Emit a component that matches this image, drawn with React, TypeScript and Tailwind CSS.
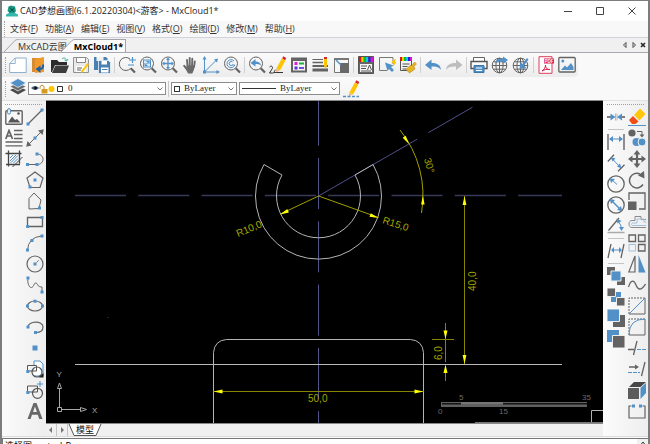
import React from 'react';
import type { ReactNode } from 'react';

const K = '#636363';
const B = '#5290c8';

type Tool = { name: string; art: ReactNode } | null;

function ToolButton({ name, art }: { name: string; art: ReactNode }) {
  return (
    <button type="button" aria-label={name} title={name} className="size-[18px] shrink-0 hover:bg-sky-100">
      <svg viewBox="0 0 18 18" className="block size-full" fill="none" stroke={K} strokeWidth="1">
        {art}
      </svg>
    </button>
  );
}

function ToolRow({ tools }: { tools: Tool[] }) {
  return (
    <div className="flex items-center gap-[3px]">
      {tools.map((t, i) =>
        t ? <ToolButton key={i} {...t} /> : <span key={i} className="h-4 w-px shrink-0 bg-[#d0d0d0]" />,
      )}
    </div>
  );
}

function ToolColumn({ tools }: { tools: Tool[] }) {
  return (
    <div className="flex flex-col items-center gap-[3px]">
      {tools.map((t, i) =>
        t ? <ToolButton key={i} {...t} /> : <span key={i} className="h-px w-4 shrink-0 bg-[#c4c4c4]" />,
      )}
    </div>
  );
}

function Dot({ x, y, s = 3 }: { x: number; y: number; s?: number }) {
  return <rect x={x - s / 2} y={y - s / 2} width={s} height={s} fill={B} stroke="none" />;
}

const Lens = () => (
  <>
    <circle cx="8" cy="7.5" r="6.5" />
    <path d="M12.7 12.2l4.3 4.3" strokeWidth="2.2" />
  </>
);

const Globe = () => (
  <>
    <circle cx="8.5" cy="9.5" r="7.3" />
    <ellipse cx="8.5" cy="9.5" rx="3.6" ry="7.3" />
    <path d="M8.5 2v15M1.2 9.5h14.6M2.5 5.8h12M2.5 13.2h12" />
  </>
);

const Rainbow = ({ x, y, w, h }: { x: number; y: number; w: number; h: number }) => (
  <g stroke="none">
    {['#e01020', '#f0d000', '#10c020', '#10c8e0', '#2020e0', '#e010d0'].map((c, i) => (
      <rect key={c} x={x + (i * w) / 6} y={y} width={w / 6} height={h} fill={c} />
    ))}
  </g>
);

const Pencil = () => (
  <g stroke="none">
    <path d="M14.3.3l3 1.6-1.2 2.3-3-1.6z" fill="#d3272f" />
    <path d="M12.800 2.600l3.600 1.900-5.400 9.900-3.600-1.900z" fill="#ffc400" />
    <path d="M7.300 12.600l3.300 1.800-3.800 2z" fill="#e6b98a" />
  </g>
);

const fileTools: Tool[] = [
  { name: '新建', art: <><path d="M.7 7.5L6.2 2h11v14.5H.7z" fill="#fff" stroke="#8fb0cf" /><path d="M.7 7.5h5.5V2" stroke="#8fb0cf" /></> },
  { name: '退出', art: <><path d="M2 2h8v14H2z" fill="#d98b34" stroke="none" /><path d="M5 3l9-2v15l-9 1z" fill="#ef9a2b" stroke="none" /><path d="M13 8.500c.5 3-.5 4.500-3.500 4.500" stroke="#1e5fa8" strokeWidth="2" /><path d="M10.500 9.500v7.500L5.500 13z" fill="#1e5fa8" stroke="none" /></> },
  { name: '打开', art: <><path d="M0 4h6l2 2h8v3H4L1 16H0z" fill="#2b2b2b" stroke="none" /><path d="M4.500 9.500H18L15 17H1z" fill="#3c3c3c" stroke="none" /><path d="M11 3c2-2 4-1 4.500 1.500M17 3l-1.500 2L13.500 4" stroke="#3fae9c" /></> },
  { name: '保存', art: <><path d="M1.500 1.500h13l2 2v13h-15z" fill="#e9e9e9" stroke="#929292" /><path d="M4.500 1.500h9v5h-9z" fill="#fff" stroke="#8b8b8b" /><path d="M4 10h10v6H4z" fill="#fff" stroke="none" /><path d="M5 12h5M5 14h4" /><path d="M17 8l-6 8-2 1 .5-2.500L15.500 7z" fill="#ffc400" stroke="none" /></> },
  { name: '另存为', art: <><path d="M1 1h12l1.500 1.500V14H1z" fill="#4b80b2" stroke="none" /><path d="M3.500 1h7v4h-7z" fill="#f2f2f2" stroke="none" /><path d="M5.500 4.500h10l2 2V17.500h-12z" fill="#4b80b2" stroke="#eef2f6" strokeWidth=".8" /><path d="M8.500 5h5.500v3.500H8.500zM8 11.500h7.500v5H8z" fill="#fff" stroke="none" /><path d="M9 13.500h5.500" stroke="#4b80b2" /></> },
  null,
  { name: '窗口缩放', art: <><path d="M12.500 12.500A6.500 6.500 0 1112 3" /><path d="M12.700 12.200l4.300 4.300" strokeWidth="2.200" /><path d="M11 4h7m-3.500-3v6M10 9h6" stroke={B} strokeWidth="1.200" /></> },
  { name: '范围缩放', art: <><Lens /><rect x="4.500" y="4" width="7" height="7" stroke={B} fill="#dceaf5" /><path d="M6 9.500l4-4M7.500 5.500H10V8M6 7v2.500h2.500" stroke={B} /></> },
  { name: '实时缩放', art: <><Lens /><path d="M8 2.500v10M3 7.500h10" stroke={B} strokeWidth="1.300" /><path d="M8 1.500l2 2.500H6zM8 13.500L6 11h4zM2 7.500l2.500-2v4zM14 7.500l-2.500 2v-4z" fill={B} stroke="none" /></> },
  { name: '平移', art: <g stroke="#6a6a6a" strokeLinecap="round"><path d="M6 4l.5 6M8.700 2v8M11.300 2.700L11 10M13.800 5.500L13 11" strokeWidth="1.900" /><path d="M3.200 9.800l3 3.700" strokeWidth="2" /><path d="M5.700 9.500h8l-.7 4-1.700 4H7L5 13.500z" fill="#6a6a6a" stroke="none" /></g> },
  { name: '坐标系', art: <><path d="M2.500 1.500v14.500H16M3 15.500L14.500 4" stroke={B} /><path d="M2.500 0l2 3.500h-4zM18 16l-3.500 2v-4zM16 2.500l-1 4-3-3z" fill={B} stroke="none" /><path d="M1 14.500h3v3H1z" fill={B} stroke="none" /></> },
  { name: '重生成', art: <><Lens /><path d="M11 5a4 4 0 10.800 4H9M9.500 6a2 2 0 100 3" stroke={B} /></> },
  null,
  { name: '上一视图', art: <><Lens /><path d="M2.500 7l5-4v2.500c3 0 5 1 5.500 4-1.500-1.500-3-1.500-5.500-1.500v2.500z" fill={B} stroke="none" /></> },
  { name: '编辑线', art: <><path d="M.5 11c2-2 4 0 2.500 2l-2.500 4h3c3 0 1-3 3-3M5 16.500h9" stroke="#333" /><Pencil /></> },
  { name: '特性', art: <><path d="M1 1.500h16v15H1z" fill={K} stroke="none" /><path d="M3 5h12v9.500H3z" fill="#f4f4f4" stroke="none" /><path d="M4.500 6h3v3h-3z" fill="#e020d0" stroke="none" /><path d="M4.500 10.500h3v3h-3z" fill="#5a30e0" stroke="none" /><path d="M9 6.500h5v2H9z" fill="#20b040" stroke="none" /><path d="M9 11h5v2H9z" fill="#7050e0" stroke="none" /></> },
  { name: '线型', art: <><path d="M1.500 3.500H12" /><path d="M1.500 6.500H12" strokeWidth="1.500" /><path d="M1.500 10H17" strokeWidth="2" /><path d="M1.500 14H17" strokeWidth="3" /><path d="M13 2h3v8l-1.500 3L13 10z" fill="#ffc400" stroke="none" /><path d="M13 1h3v2h-3z" fill="#d3272f" stroke="none" /></> },
  { name: '图层', art: <><path d="M2.500 2.500h14v14h-14z" fill="#f6f6f6" stroke="#777" /><path d="M2 2h15v2H2z" fill="#777" stroke="none" /><path d="M8 7h9v10H8z" fill="#686868" stroke="none" /><path d="M4 4l5 5" stroke={B} strokeWidth="1.400" /></> },
  null,
  { name: '颜色', art: <><path d="M1.500.5h15v17h-15z" fill="#666" stroke="#555" /><Rainbow x={2} y={1} w={14} h={5} /><path d="M3 8h12v8H3z" fill="#f4f4f4" stroke="none" /><path d="M4 10h6M4 12.500h5M4 15h10M10.500 14l2-5 2 5" stroke="#555" /></> },
  { name: '快速选择', art: <><path d="M15 8V1.500H1.500v13H9" stroke="#777" /><path d="M7 6.500l8.500 3-2.500 1.500 3 3-2 2-3-3L9.500 15z" fill={B} stroke="none" /><path d="M15 4l3-1-1 3h1.500l-4 5 1-4h-2z" fill="#ffc400" stroke="none" /></> },
  { name: '特性匹配', art: <><path d="M1.500 1.500h11v13h-11z" fill="#f2f2f2" stroke="#555" /><Rainbow x={1} y={1} w={12} h={4} /><path d="M3.500 8h7M3.500 10.500h5M3.500 13h4" stroke="#555" /><path d="M15.500 6l2 2-2.500 2.500 1 2.500-5.500 4-3.500-3.500L11 9.500h2z" fill="#e6b322" stroke="#a87b12" strokeWidth=".5" /></> },
  null,
  { name: '撤销', art: <path d="M1 9l6.500-5.500V7c5 0 9 1.500 9.500 7-2-3-4.500-3.500-9.500-3.500V14z" fill={B} stroke="none" /> },
  { name: '重做', art: <path d="M17.500 9L11 3.500V7c-5 0-9.500 1.500-10 7 2-3 5-3.500 10-3.500V14z" fill="#bdbdbd" stroke="none" /> },
  null,
  { name: '打印', art: <><path d="M3.500 5V1.500h11V5" fill="#fff" /><path d="M1 5.500h16v7H1z" fill="#fafafa" stroke="#555" strokeWidth="1.400" /><path d="M4 9.500h10v7H4z" fill={B} stroke="#3f74a3" /><path d="M6 12h6M6 14.500h6" stroke="#fff" /></> },
  { name: '发布', art: <><Globe /><path d="M4 8c1-5 4-6 8-5.500V.5L17 4l-5 4V6C9 5 6 5 4 8z" fill={B} stroke="none" /></> },
  { name: '下载', art: <><Globe /><path d="M16.500 3.500L12 9.500l2.500 2.500-7 1 1-7 2 2L15 2z" fill={B} stroke="none" /></> },
  null,
  { name: '输出PDF', art: <><path d="M2 .7h13v16.600H2z" fill="#fff" stroke="#dc3c5c" /><path d="M7 2.500h10v5H7z" fill="#d91c45" stroke="none" /><text x="7.500" y="6.800" fontSize="4.500" fontWeight="bold" fontFamily="Liberation Sans, sans-serif" fill="#fff" stroke="none">PDF</text><path d="M5 15c2-1 3.500-3.500 3.500-6 0 3 2 5 4.500 4.500-3-.5-5.500 0-8 1.500z" stroke="#d91c45" /></> },
  { name: '输出图片', art: <><rect x=".8" y="1.500" width="16.400" height="14.500" rx="1" strokeWidth="1.300" /><path d="M3 14l4-4.500 2 2L13 7l2.500 4v3z" fill={B} stroke="none" /><circle cx="4.800" cy="5" r="1.500" fill={B} stroke="none" /></> },
];

const annotateTools: Tool[] = [
  { name: '插入图像', art: <><rect x=".8" y="2.800" width="16.400" height="13.500" rx="1" strokeWidth="1.400" /><path d="M3 14.500l4-6 3 3.500 2-1 3.500 3.500z" fill="#555" stroke="none" /><circle cx="13.500" cy="5.500" r="1.300" fill="#555" stroke="none" /><rect x="2.500" y=".6" width="3" height="5.500" rx="1.500" stroke={B} fill="#eee" /></> },
  { name: '多行文字', art: <><path d="M.8 10L4 1.500 7.500 10M2 7h4.500" strokeWidth="1.700" /><path d="M9 1.500h8.500M9 5.500h8.500M9 9.500h8.500M.5 13h17M.5 16.800h17" strokeWidth="1.300" /></> },
  { name: '填充', art: <><path d="M.5 3.500h16M1 14.500h14M3.500.5v16M14.500.5v13" stroke="#444" strokeWidth="1.300" /><path d="M5 8l3-3M5 11l6-6M5.500 13L13 5.500M8.500 13L13 8.500" stroke={B} /><path d="M17.500 7l-10 10" stroke="#444" /></> },
];

const drawTools: Tool[] = [
  { name: '直线', art: <><path d="M2 16L16 2" strokeWidth="1.300" /><Dot x={2} y={16} /><Dot x={16} y={2} /></> },
  { name: '构造线', art: <><path d="M2 16L16 2" /><path d="M17.800.2L16.500 6 12 1.500zM.2 17.800l5.300-1.300-4-4.500z" fill={K} stroke="none" /><Dot x={9} y={9} /></> },
  { name: '多段线', art: <><path d="M1 14.500h10c8 0 8-10.500 0-10.500" /><Dot x={1.500} y={14.500} /><Dot x={11} y={14.500} /><Dot x={11} y={4} /></> },
  { name: '正多边形', art: <><path d="M9 1l8 6-3 9.500H4L1 7z" strokeWidth="1.200" /><Dot x={9} y={9} /><Dot x={4} y={16} /></> },
  { name: '多边形', art: <><path d="M3 17V6.500L8 1l7 7-2 8.500z" /><Dot x={13.500} y={16} /></> },
  { name: '矩形', art: <><path d="M1.500 4.500h15v9h-15z" strokeWidth="1.300" /><Dot x={1.700} y={13.500} /><Dot x={16} y={4.500} /></> },
  { name: '圆弧', art: <><path d="M1.500 16.500Q2 3 16 2" /><Dot x={1.500} y={16} /><Dot x={6} y={6.500} /><Dot x={16} y={2} /></> },
  { name: '圆', art: <><circle cx="9" cy="9" r="8" strokeWidth="1.200" /><path d="M9 9l4-4" strokeDasharray="2 1" /><Dot x={9} y={9} /></> },
  { name: '样条曲线', art: <><path d="M2 2c-1 4 1 10 3.500 9.500S8 6.500 10 7c2 .5 1 4 6 4v5" /><Dot x={2} y={2} /><Dot x={16} y={16} /></> },
  { name: '椭圆', art: <><ellipse cx="9" cy="9" rx="7.500" ry="5" strokeWidth="1.200" /><Dot x={1.500} y={9} /><Dot x={9} y={4.200} /><Dot x={16.500} y={9} /></> },
  { name: '椭圆弧', art: <><path d="M2 9c0-6 15-7 15 0 0 4-3 5.500-7 5.500" strokeWidth="1.200" /><Dot x={2} y={9} /><Dot x={9.500} y={14.500} /></> },
  { name: '点', art: <Dot x={9} y={9} s={5} /> },
  { name: '插入块', art: <><path d="M8 6V1h6l3 3v12H8" fill="#fff" stroke={B} /><path d="M1.500 11V5.500h9v5.500z" stroke="#555" /><circle cx="11" cy="12" r="5" stroke="#555" strokeWidth="1.200" /><path d="M17.500 13v4.500H13z" fill="#222" stroke="none" /><Dot x={1.800} y={11.500} /></> },
  { name: '创建块', art: <><path d="M1.500 11V5h10v6z" stroke="#555" /><circle cx="11.500" cy="12.300" r="5" stroke="#555" strokeWidth="1.200" /><path d="M11 3h6M14 0v6" stroke={B} /><Dot x={1.800} y={11.500} /></> },
  { name: '单行文字', art: <path d="M1.500 17L7.500 1h3l6 16h-3.200l-1.500-4.300H6L4.600 17zM7 10h3.900L9 4.500z" fill="#686868" stroke="none" /> },
];

const dimTools: Tool[] = [
  { name: '打断', art: <><path d="M0 9h4M18 9h-4" stroke="#555" strokeWidth="1.300" /><path d="M8.500 5.500v7M10 5.500v7" stroke="#9a9a9a" strokeWidth=".7" /><path d="M3.500 5.500l5 3.500-5 3.500zM15 5.500L10 9l5 3.500z" fill={B} stroke="none" /></> },
  null,
  { name: '线性标注', art: <><path d="M1 1v16M17 1v16" strokeWidth="1.400" /><path d="M3 6h12" stroke={B} /><path d="M2 6l4-3v6zM16 6l-4-3v6z" fill={B} stroke="none" /></> },
  { name: '对齐标注', art: <><path d="M.8 7.500L7 .8M11 17.200l6.500-6.500" strokeWidth="1.300" /><path d="M5 4.500l8 8.500" stroke={B} /><path d="M3.500 3l5 1.500-3 3zM14.500 14.500l-1.500-5-3 3z" fill={B} stroke="none" /></> },
  { name: '半径标注', art: <><circle cx="9" cy="9" r="8.200" strokeWidth="1.300" /><path d="M4 4l6 5.500" stroke={B} /><path d="M2.800 3.500l5.200.5-4 4z" fill={B} stroke="none" /></> },
  { name: '直径标注', art: <><circle cx="9" cy="9" r="8.200" strokeWidth="1.300" /><path d="M4 4l10 10" stroke={B} strokeWidth="1.500" /><path d="M2.800 3l5.200 1-4 4zM15.200 15l-1.200-5-4 4z" fill={B} stroke="none" /></> },
  { name: '角度标注', art: <><path d="M12 1L1.500 13.500" strokeWidth="1.300" /><path d="M.5 15.500h17" stroke="#aaa" strokeWidth="1.500" /><path d="M11 4q3.500 4 3.500 8" stroke={B} /><path d="M9.500 1.500l5 2.500-4 2.500zM14.500 14l-2.500-4h5z" fill={B} stroke="none" /></> },
  null,
  { name: '倾斜标注', art: <><path d="M4 2L1 16M17 2l-3 14" strokeWidth="1.300" /><path d="M5 8h9" stroke={B} /><path d="M4 8l3-3v6zM15 8l-3-3v6z" fill={B} stroke="none" /></> },
  null,
  { name: '前置', art: <g stroke="none"><path d="M0 0h8v8H0zM10 10h8v8h-8z" fill={K} /><path d="M4 4h10v10H4z" fill={B} stroke="#eee" /></g> },
  { name: '后置', art: <g stroke="none"><path d="M4 4h10v10H4z" fill={B} /><path d="M0 0h8.500v8.500H0zM9.500 9.500H18V18H9.500z" fill={K} stroke="#eee" /></g> },
  { name: '置于对象之上', art: <g stroke="none"><path d="M6 6h12v12H6z" fill={K} /><path d="M0 0h12.500v12.500H0z" fill={B} stroke="#eee" /></g> },
  { name: '置于对象之下', art: <g stroke="none"><path d="M0 0h12v12H0z" fill={B} /><path d="M5.500 5.500H18V18H5.500z" fill={K} stroke="#eee" /></g> },
];

const modifyTools: Tool[] = [
  { name: '删除', art: <g stroke="none"><path d="M12 .5l5.500 5.500-6 6.500L6 7z" fill="#ffc60a" /><path d="M5 8l5.500 5.500-3 2.500H4L1 12z" fill="#f04e14" /><path d="M0 17h18v1H0z" fill={B} /></g> },
  { name: '复制', art: <g stroke="none"><circle cx="4" cy="4" r="3.600" fill={K} /><path d="M9 2.500h5v4" stroke={K} /><path d="M14 8.500l-2.500-3h5z" fill={K} /><circle cx="8.500" cy="13" r="4" fill={B} /><circle cx="14" cy="13" r="4" fill={B} stroke="#eee" /></g> },
  { name: '移动', art: <><path d="M9 2v14M2 9h14" strokeWidth="2.200" /><path d="M9 0l3.500 4.500h-7zM9 18l-3.500-4.500h7zM0 9l4.500-3.500v7zM18 9l-4.500 3.500v-7z" fill={K} stroke="none" /></> },
  { name: '旋转', art: <><path d="M15 13.500A7.300 7.300 0 1112 3" strokeWidth="1.500" /><path d="M16 0l.5 7.500-6.500-3z" fill={K} stroke="none" /></> },
  { name: '缩放', art: <><path d="M1 8V1h16v16h-6" strokeWidth="1.300" /><path d="M0 9.500h8.500V18H0z" fill={K} stroke="none" /></> },
  { name: '偏移', art: <><path d="M18 6.500h-5v-3H7v4H4c-4 0-4 7 0 7h14" stroke="#8a8a8a" /><path d="M18 9h-2V6H9v4H5c-2 0-2 2.500 0 2.500h13" stroke="#9fc1e0" /></> },
  { name: '阵列', art: <><path d="M1 1h6.500v6.500H1zM10.500 1H17v6.500h-6.500zM10.500 10.500H17V17h-6.500z" strokeWidth="1.300" /><path d="M1 10.500h6.500V17H1z" stroke="#9fc1e0" /></> },
  { name: '镜像', art: <><path d="M7 1v16H.8z" strokeWidth="1.200" /><path d="M10.500 0L17.500 17.500h-7z" fill={B} stroke="none" /></> },
  { name: '编辑样条', art: <path d="M.5 11C3 3 6 4 8 9s5 6 9.500-1" strokeWidth="1.300" /> },
  { name: '倒角', art: <><path d="M1 17h16V1" /><path d="M1 17V1h16" strokeDasharray="2 1" /><path d="M1 17L17 1" stroke={B} /></> },
  { name: '圆角', art: <><path d="M1 17h16V1" /><path d="M1 17V1h16" strokeDasharray="2 1" /><path d="M1 17Q1 1 17 1" stroke={B} /></> },
  { name: '修剪', art: <><path d="M0 10.500h6M9 2L5.500 16" strokeWidth="1.300" /><path d="M9 10.500h9" stroke={B} strokeDasharray="4 1" /></> },
  { name: '延伸', art: <><path d="M1 7h7M17 2l-3.500 14" strokeWidth="1.300" /><path d="M7 4.500L11 7 7 9.500z" fill={K} stroke="none" /><path d="M0 12.500h12" stroke={B} strokeDasharray="4 1" /></> },
  { name: '三维', art: <g stroke="none"><path d="M0 7h11v11H0z" fill="#5c5c5c" /><path d="M1 6l5-5h12l-5.500 5z" fill="#474747" /><path d="M12.500 7L18 2v10l-5.500 6z" fill={B} /></g> },
  { name: '合并', art: <><path d="M3 4H1v12h16V4h-2" strokeWidth="1.200" /><path d="M3 4h4M11 4h4" stroke="#7fb0da" /><Dot x={5.500} y={4} /><Dot x={12.500} y={4} /></> },
];

const menus: [string, string][] = [
  ['文件', 'F'], ['功能', 'A'], ['编辑', 'E'], ['视图', 'V'],
  ['格式', 'O'], ['绘图', 'D'], ['修改', 'M'], ['帮助', 'H'],
];

function Grip() {
  return <span className="h-4 w-px shrink-0 border-l border-dotted border-[#a0a0a0]" />;
}

function Combo({ label, value, width, children }: { label: string; value: string; width: string; children: ReactNode }) {
  return (
    <label className={`relative flex h-[13px] shrink-0 items-center border border-[#8c8c8c] bg-white ${width}`}>
      <span className="pointer-events-none flex shrink-0 items-center pl-[2px]">{children}</span>
      <select
        aria-label={label}
        defaultValue={value}
        className="h-[11px] min-w-0 flex-1 appearance-none bg-transparent pl-1 font-['Liberation_Serif','Noto_Sans_CJK_SC',serif] text-[9px] leading-[11px] text-[#222] outline-none"
      >
        <option>{value}</option>
      </select>
      <svg viewBox="0 0 6 4" className="pointer-events-none absolute right-[2px] h-1 w-1.5" fill="none" stroke="#666" strokeWidth=".9">
        <path d="M.5.5L3 3 5.500.5" />
      </svg>
    </label>
  );
}

function Slant({ fill }: { fill: string }) {
  return (
    <svg viewBox="0 0 14 13" className="block h-[13px] w-[14px] shrink-0">
      <path d="M0 13L11 1.500Q12 .5 14 .5V13z" fill={fill} />
      <path d="M0 13L11 1.500Q12 .5 14 .5" fill="none" stroke="#a3a3ab" />
    </svg>
  );
}

function Drawing() {
  return (
    <svg
      viewBox="46 101 557 322"
      preserveAspectRatio="xMidYMid slice"
      className="block size-full"
      fill="none"
      stroke="#b4b4b4"
      role="img"
      aria-label="MxCloud1"
    >
      <g stroke="#47476f">
        <path d="M75 195.500H562" strokeDasharray="51 12.300" stroke="#39395a" strokeWidth="1.400" />
        <path d="M318.500 94.700V423" strokeDasharray="51 12.300" stroke="#53538a" />
        <path d="M318.500 196L417 139.300M428.300 132.700L472.500 107.200M483 101l3-2" stroke="#50508a" />
      </g>
      <path d="M264 164.500A63 63 0 10373 164.500L355 175A42 42 0 11282 175z" />
      <path d="M75 364.500H562" stroke="#b8b8b8" />
      <path d="M213.500 423V352.500q1-12 13-13h184q12 1 13 13V423" />
      <g stroke="#848400">
        <path d="M318.500 196L280.500 214M318.500 196L378.500 217.500" stroke="#a0a000" />
        <path d="M400 130A104.500 104.500 0 01421.500 213" stroke="#a0a000" />
        <path d="M464.500 196V364" />
        <path d="M445.500 323V362M445.500 366v15M432 339.500h22M213.500 391.500h210" />
      </g>
      <g fill="#ffff00" stroke="none">
        <path d="M280 214.500l7.300-5.500 1.600 3.400zM378.500 218l-9-1.300 1.300-3.500zM409 144l-6.300-6.200 3-2zM422.900 195.500l1.700 9h-3.500z" />
        <path d="M464.500 196l1.900 9h-3.800zM464.500 364l1.900-9h-3.800zM445.500 339l2-8.500h-4zM445.500 364.500l2 8.500h-4z" />
        <path d="M213.500 391.500l9-1.900v3.800zM423.500 391.500l-9-1.900v3.800z" />
      </g>
      <g fill="#a6a600" stroke="none" fontSize="10" fontFamily="'Liberation Sans', Arial, sans-serif">
        <text transform="translate(238 237) rotate(-23)">R10,0</text>
        <text transform="translate(382 223) rotate(18)">R15,0</text>
        <text transform="translate(424 159) rotate(75)">30°</text>
        <text transform="translate(476 291) rotate(-90)">40,0</text>
        <text transform="translate(442 360) rotate(-90)">6,0</text>
        <text x="308" y="402">50,0</text>
      </g>
      <g stroke="#a8a8a8">
        <path d="M57.500 407.500h4v4h-4zM59.500 407V388M57.500 388.500l2-5.500 2 5.500zM62 409.500h18M80.500 407.500l6 2-6 2z" />
      </g>
      <g fill="#a8a8a8" stroke="none" fontSize="8" fontFamily="'Liberation Sans', Arial, sans-serif">
        <text x="56.500" y="377">Y</text>
        <text x="92" y="412.500">X</text>
      </g>
      <g stroke="none">
        <path d="M441 402h146v5H441z" fill="#606060" />
        <path d="M442 403h19v1.500h-19zM503 403h84v1.500h-84z" fill="#151515" />
        <path d="M461 402h42v2h-42z" fill="#757575" />
      </g>
      <g fill="#6a6a6a" stroke="none" fontSize="8" fontFamily="'Liberation Sans', Arial, sans-serif">
        <text x="459" y="400">5</text>
        <text x="582" y="400">35</text>
        <text x="438" y="414">0</text>
        <text x="499" y="414">15</text>
      </g>
      <path d="M591.500 423V410.500H603" />
      <path d="M475 422.500H603" stroke="#777" />
      <path d="M107.500 317.500h1" stroke="#504010" />
    </svg>
  );
}

export default function App() {
  return (
    <div className="flex h-screen flex-col overflow-hidden border-x-2 border-t border-[#7b7d7f] bg-[#f9f9f9] font-['Open_Sans','Noto_Sans_CJK_SC',sans-serif] text-[#333]">
      <header className="flex h-5 shrink-0 items-center bg-white pl-1">
        <svg viewBox="0 0 12 12" className="size-3" aria-hidden="true">
          <path d="M1.500 6l1-4.500L5 .5l4 1 1 4.500-2 2.500H4z" fill="#179a82" />
          <path d="M4 2.500l2 2.500 2.500-2M3.500 7L6 5l2.500 2" stroke="#064b48" fill="none" />
          <path d="M0 9.500l3-1.500h6l3 1.500v2H0z" fill="#36b7ad" />
        </svg>
        <h1 className="ml-[2px] flex-1 whitespace-nowrap text-[9px] leading-5 text-[#222]">
          CAD梦想画图(6.1.20220304)&lt;游客&gt; - MxCloud1*
        </h1>
        <div className="flex items-center gap-[24px] pr-[12px]">
          {[['最小化', 'M0 4.500h8'], ['最大化', 'M.5.5h7v7h-7z'], ['关闭', 'M.5.5l7 7M7.500.5l-7 7']].map(([name, d]) => (
            <button key={name} type="button" aria-label={name} className="size-2">
              <svg viewBox="0 0 8 8" className="block size-full" fill="none" stroke="#444"><path d={d} /></svg>
            </button>
          ))}
        </div>
      </header>

      <nav className="flex h-4 shrink-0 items-center gap-[5px] bg-[#f8f8f8] pl-[2px]">
        <Grip />
        <div className="flex gap-[7px]">
          {menus.map(([title, key]) => (
            <button key={key} type="button" className="whitespace-nowrap text-[9px] leading-4">
              {title}(<u>{key}</u>)
            </button>
          ))}
        </div>
      </nav>

      <div className="flex h-4 shrink-0 items-end border-y border-t-[#d2d2da] border-b-[#a9a9b5] bg-[#f0f0f0] pl-[2px] text-[9px]">
        <button type="button" className="flex items-end">
          <Slant fill="#f0f0f0" />
          <span className="h-[13px] border-t border-[#c0c0c6] leading-[13px]">MxCAD云图</span>
        </button>
        <button type="button" className="-ml-[6px] flex items-end font-bold text-black">
          <Slant fill="#fafafa" />
          <span className="-ml-px h-[13px] border-t border-r border-[#a3a3ab] bg-[#fafafa] pr-[2px] leading-[13px]">MxCloud1*</span>
        </button>
        <div className="ml-auto flex h-full items-center gap-[3px] pr-[2px]">
          {[['向左', 'M4 .5v5L1.500 3z'], ['向右', 'M2 .5v5L4.500 3z'], ['关闭标签', 'M1 1l4 4M5 1L1 5']].map(([name, d], i) => (
            <button key={name} type="button" aria-label={name} className="h-1.5 w-1.5">
              <svg viewBox="0 0 6 6" className="block size-full" fill="none" stroke="#222" strokeWidth={i === 2 ? 1.5 : 0.8}><path d={d} /></svg>
            </button>
          ))}
        </div>
      </div>

      <div className="flex shrink-0 flex-col items-start">
        <div className="flex h-[24px] items-center gap-[3px] rounded-r-sm bg-gradient-to-b from-[#fbfbfb] to-[#ececec] pr-[2px] pl-[3px]">
          <Grip />
          <ToolRow tools={fileTools} />
        </div>
        <div className="flex h-[23px] items-center bg-gradient-to-b from-[#fbfbfb] to-[#f1f1f1] pl-[3px]">
          <Grip />
          <span className="ml-[3px]">
            <ToolButton
              name="图层管理"
              art={<g stroke="none"><path d="M1 13l8-4 8 4-8 4.500z" fill="#4a4a4a" /><path d="M1 9.500l8-4 8 4-8 4.500z" fill="#6a6a6a" stroke="#f4f4f4" strokeWidth=".7" /><path d="M1 6L9 1.500 17 6l-8 4.500z" fill={B} stroke="#f4f4f4" strokeWidth=".7" /></g>}
            />
          </span>
          <div className="ml-px flex items-center gap-[2px]">
            <Combo label="图层" value="0" width="w-[138px]">
              <svg viewBox="0 0 33 10" className="h-[10px] w-[33px]">
                <path d="M0 4q4-4 8 0-4 4-8 0z" fill="#47637d" /><circle cx="4.500" cy="4" r="1.500" fill="#111" />
                <path d="M9 5V2.500Q11-.5 13 2.500V5" fill="none" stroke="#c08a20" /><path d="M10.500 5h6v4.500h-6z" fill="#d59a1e" />
                <circle cx="20.500" cy="5" r="3" fill="#ffc400" />
                <path d="M26.500 2.500h5v5h-5z" fill="#fff" stroke="#333" />
              </svg>
            </Combo>
            <span className="h-4 w-px bg-[#c8c8c8]" />
            <Combo label="颜色" value="ByLayer" width="w-[66px]">
              <span className="size-1.5 border border-[#333]" />
            </Combo>
            <Combo label="线型" value="ByLayer" width="w-[101px]">
              <span className="h-px w-[34px] bg-[#333]" />
            </Combo>
            <ToolButton name="线宽" art={<><Pencil /><path d="M1 16.500h16" stroke={B} strokeWidth="1.500" strokeDasharray="3 1.500" /></>} />
          </div>
        </div>
      </div>

      <main className="flex min-h-0 flex-1">
        <aside className="flex w-[44px] shrink-0 flex-col border-t border-[#e2e2e2] bg-gradient-to-r from-[#fbfbfb] to-[#eeeeee] pl-[3px]">
          <span className="my-[3px] w-[37px] border-t border-dotted border-[#a0a0a0]" />
          <div className="flex gap-[3px]">
            <ToolColumn tools={annotateTools} />
            <ToolColumn tools={drawTools} />
          </div>
        </aside>

        <section className="flex min-w-0 flex-1 flex-col bg-[#f0f0f0]">
          <div className="min-h-0 flex-1 border-y border-t-[#888] border-b-[#888] bg-black">
            <Drawing />
          </div>
          <div className="flex h-[12px] shrink-0 items-stretch text-[9px]">
            {[['上一页', 'M4 0v6L1 3z'], ['下一页', 'M2 0v6l3-3z']].map(([name, d]) => (
              <button key={name} type="button" aria-label={name} className="flex w-[11px] items-center justify-center border-r border-[#c4c4c4]">
                <svg viewBox="0 0 6 6" className="size-1.5" fill="#777"><path d={d} /></svg>
              </button>
            ))}
            <button type="button" className="flex items-stretch text-[#111]">
              <svg viewBox="0 0 8 12" className="h-3 w-2" stroke="#555"><path d="M1 0l5 11.500h2V0z" fill="#fff" stroke="none" /><path d="M1 0l5 11.500h2" fill="none" /></svg>
              <span className="border-b border-[#555] bg-white leading-[11px]">模型</span>
              <svg viewBox="0 0 8 12" className="h-3 w-2" stroke="#555"><path d="M7 0L2 11.500H0V0z" fill="#fff" stroke="none" /><path d="M7 0L2 11.500H0" fill="none" /></svg>
            </button>
          </div>
        </section>

        <aside className="flex w-[45px] shrink-0 flex-col border-t border-[#e2e2e2] bg-gradient-to-r from-[#fbfbfb] to-[#eeeeee] pl-1">
          <span className="my-[3px] w-[37px] border-t border-dotted border-[#a0a0a0]" />
          <div className="flex gap-[3px]">
            <ToolColumn tools={dimTools} />
            <ToolColumn tools={modifyTools} />
          </div>
        </aside>
      </main>

      <footer className="flex h-2 shrink-0 overflow-hidden border-t border-[#dcdcdc] pt-px">
        <div className="flex h-4 flex-1 border-t border-l border-[#777] bg-white">
          <output className="flex-1 pl-[2px] text-[9px] leading-[13px] text-black">选择图 mxtechB</output>
          <button type="button" aria-label="向上滚动" className="flex w-[11px] justify-center bg-[#f0f0f0] pt-[2px]">
            <svg viewBox="0 0 6 4" className="h-1 w-1.5" fill="none" stroke="#333"><path d="M1 3.500L3 1l2 2.500" /></svg>
          </button>
        </div>
      </footer>
    </div>
  );
}
